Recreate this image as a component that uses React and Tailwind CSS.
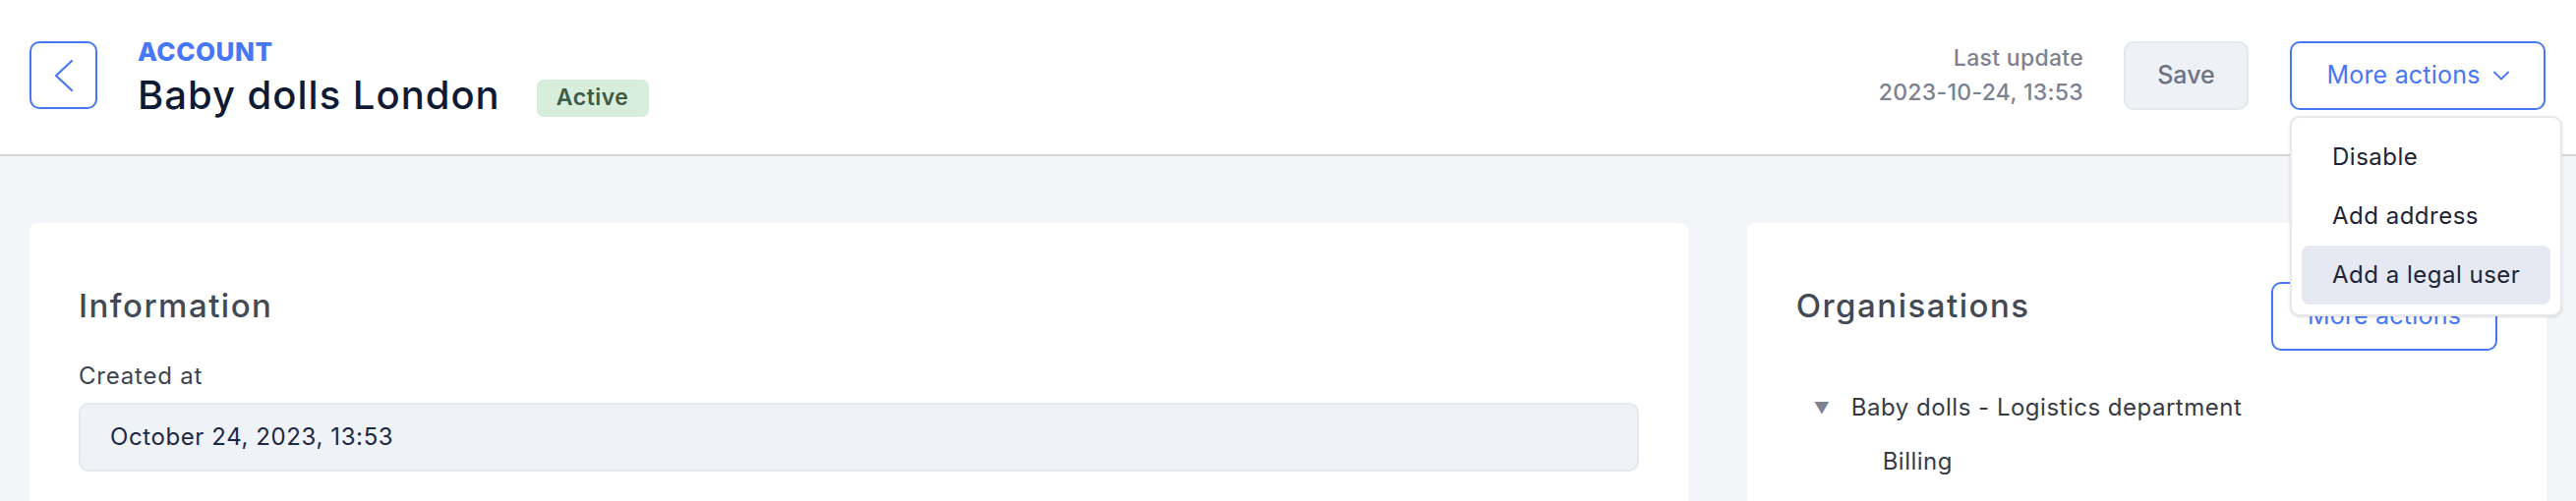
import { useState } from "react"

const menuItems = ["Disable", "Add address", "Add a legal user"]

function ChevronLeft() {
  return (
    <svg width="20" height="32" viewBox="0 0 20 32" fill="none">
      <path d="M18 1 L2 16 L18 31" stroke="#4677f6" strokeWidth="2.2" strokeLinecap="round" strokeLinejoin="round" />
    </svg>
  )
}

function ChevronDown() {
  return (
    <svg width="16" height="10" viewBox="0 0 16 10" fill="none">
      <path d="M1 1.5 L8 8.5 L15 1.5" stroke="#4677f6" strokeWidth="1.8" strokeLinecap="round" strokeLinejoin="round" />
    </svg>
  )
}

function ActionsMenu() {
  const [active] = useState(2)

  return (
    <div className="relative">
      <button className="flex h-[70px] w-[260px] items-center justify-center gap-[13px] rounded-[10px] border-2 border-[#4677f6] bg-white text-[25px] tracking-[0.2px] text-[#4677f6]">
        More actions
        <ChevronDown />
      </button>
      <div className="absolute left-0 top-[76px] z-10 w-[277px] rounded-[10px] border-2 border-[#e7e8eb] bg-white px-[10px] py-[10px] shadow-sm">
        {menuItems.map((item, i) => (
          <div
            key={item}
            className={`flex h-[60px] items-center rounded-[8px] pl-[31px] text-[24px] tracking-[0.5px] text-[#1d2436] ${
              i === active ? "bg-[#e6e9f1]" : ""
            }`}
          >
            {item}
          </div>
        ))}
      </div>
    </div>
  )
}

export default function App() {
  return (
    <div className="h-[510px] overflow-hidden bg-[#f4f5f9] font-['Inter',sans-serif]">
      <header className="flex h-[159px] items-center justify-between border-b-2 border-[#d5d5d5] bg-white pb-[4px] pl-[30px] pr-[31px]">
        <div className="flex items-center gap-[41px]">
          <button className="flex h-[69px] w-[69px] items-center justify-center rounded-[10px] border-2 border-[#4677f6]">
            <ChevronLeft />
          </button>
          <div className="flex flex-col pt-[4px]">
            <span className="text-[26px] font-extrabold leading-[30px] tracking-[0.5px] text-[#4677f6]">ACCOUNT</span>
            <div className="mt-[6px] flex items-center gap-[37px]">
              <h1 className="text-[40px] font-medium leading-[46px] tracking-[1px] text-[#0f1a33]">Baby dolls London</h1>
              <span className="mt-[6px] flex h-[38px] w-[114px] items-center justify-center rounded-[7px] bg-[#d8eedc] text-[23px] font-semibold tracking-[0.5px] text-[#3e5b45]">
                Active
              </span>
            </div>
          </div>
        </div>

        <div className="flex items-center">
          <div className="flex flex-col items-end text-[23px] font-medium leading-[35px] tracking-[0.3px] text-[#7c8292]">
            <span>Last update</span>
            <span>2023-10-24, 13:53</span>
          </div>
          <button className="ml-[41px] h-[70px] w-[127px] rounded-[10px] border-2 border-[#e4e7ec] bg-[#eef1f6] text-[25px] font-medium text-[#6e7382]">
            Save
          </button>
          <div className="ml-[42px]">
            <ActionsMenu />
          </div>
        </div>
      </header>

      <main className="grid grid-cols-3 gap-[60px] px-[30px] pt-[68px]">
        <section className="col-span-2 h-[400px] rounded-[8px] bg-white px-[50px] pt-[66px]">
          <h2 className="text-[33px] font-medium leading-[36px] tracking-[1.5px] text-[#434955]">Information</h2>
          <label className="mt-[38px] block text-[24px] leading-[32px] tracking-[0.8px] text-[#3e4350]">Created at</label>
          <div className="mt-[11px] flex h-[70px] items-center rounded-[10px] border-2 border-[#e6e8ec] bg-[#eff2f7] pl-[30px] text-[24px] tracking-[0.6px] text-[#1d2843]">
            October 24, 2023, 13:53
          </div>
        </section>

        <section className="h-[400px] rounded-[8px] bg-white px-[50px] pt-[60px]">
          <div className="flex items-start justify-between">
            <h2 className="mt-[6px] text-[33px] font-medium leading-[36px] tracking-[1.5px] text-[#434955]">Organisations</h2>
            <button className="h-[70px] w-[230px] rounded-[10px] border-2 border-[#4677f6] text-[25px] tracking-[0.2px] text-[#4677f6]">
              More actions
            </button>
          </div>
          <div className="mt-[40px] flex items-center gap-[22px] pl-[18px] text-[24px] tracking-[0.5px] text-[#363b47]">
            <span className="text-[16px] tracking-normal text-[#7c8292]">▼</span>
            <span>Baby dolls - Logistics department</span>
          </div>
          <div className="mt-[19px] pl-[88px] text-[24px] tracking-[0.5px] text-[#363b47]">Billing</div>
        </section>
      </main>
    </div>
  )
}
